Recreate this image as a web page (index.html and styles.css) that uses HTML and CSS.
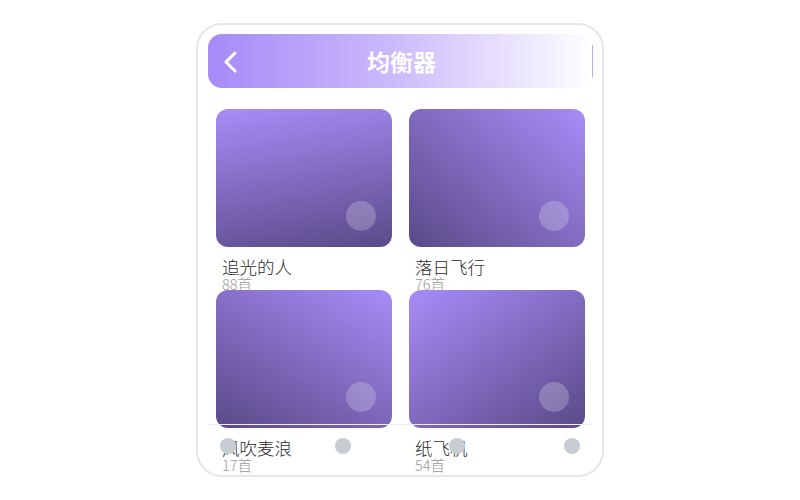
FILE: index.html
```html
<!DOCTYPE html>
<html lang="zh-CN">
<head>
    <meta charset="UTF-8">
    <meta name="viewport" content="width=device-width, initial-scale=1.0">
    <title>均衡器</title>
    <link rel="stylesheet" href="styles.css">
</head>
<body>
    <div class="phone">
        <header class="top-bar">
            <svg class="back" width="16" height="24" viewBox="0 0 16 24">
                <path d="M12 3 L3 12 L12 21" fill="none" stroke="#fff" stroke-width="3" stroke-linecap="round" stroke-linejoin="round"/>
            </svg>
            <h1>均衡器</h1>
            <span class="edge"></span>
        </header>

        <div class="grid">
            <div class="item">
                <div class="cover c1"><span class="play"></span></div>
                <p class="name">追光的人</p>
                <p class="count">88首</p>
            </div>
            <div class="item">
                <div class="cover c2"><span class="play"></span></div>
                <p class="name">落日飞行</p>
                <p class="count">76首</p>
            </div>
            <div class="item">
                <div class="cover c3"><span class="play"></span></div>
                <p class="name">风吹麦浪</p>
                <p class="count">17首</p>
            </div>
            <div class="item">
                <div class="cover c4"><span class="play"></span></div>
                <p class="name">纸飞机</p>
                <p class="count">54首</p>
            </div>
        </div>

        <nav class="tab-bar">
            <span class="dot"></span>
            <span class="dot"></span>
            <span class="dot"></span>
            <span class="dot"></span>
        </nav>
    </div>
</body>
</html>
```

FILE: styles.css
```css
/* 均衡器页面 */
body {
    margin: 0;
    height: 100vh;
    display: flex;
    align-items: center;
    justify-content: center;
    background-color: #fff;
    font-family: "Noto Sans CJK SC", "Noto Sans", sans-serif;
}

.phone {
    position: relative;
    width: 408px;
    height: 454px;
    box-sizing: border-box;
    border: 2px solid #e6e6ea;
    border-radius: 26px;
    overflow: hidden;
    background-color: #fff;
}

.top-bar {
    position: relative;
    height: 54px;
    margin: 9px 7px 0 10px;
    border-radius: 14px;
    background: linear-gradient(90deg, #a68af8 0%, #c9b7fb 45%, #fff 100%);
    display: flex;
    align-items: center;
    justify-content: center;
}

.top-bar .back {
    position: absolute;
    left: 15px;
    top: 16px;
}

.top-bar h1 {
    margin: 0;
    font-size: 23px;
    font-weight: 700;
    color: #fff;
}

.top-bar .edge {
    position: absolute;
    right: 2px;
    top: 11px;
    width: 1px;
    height: 32px;
    background-color: #b9a6f6;
}

.grid {
    display: grid;
    grid-template-columns: 1fr 1fr;
    column-gap: 17px;
    padding: 21px 17px 0 18px;
}

.cover {
    position: relative;
    height: 138px;
    border-radius: 12px;
}

.c1 { background: linear-gradient(170deg, #a88cf8 0%, #5a4a88 100%); }
.c2 { background: linear-gradient(220deg, #a88cf8 0%, #5a4a88 100%); }
.c3 { background: linear-gradient(210deg, #a88cf8 0%, #5a4a88 100%); }
.c4 { background: linear-gradient(145deg, #a88cf8 0%, #5a4a88 100%); }

.play {
    position: absolute;
    right: 16px;
    bottom: 16px;
    width: 30px;
    height: 30px;
    border-radius: 50%;
    background-color: rgba(255, 255, 255, 0.22);
}

.name {
    margin: 10px 0 0;
    padding-left: 6px;
    font-size: 17.5px;
    font-weight: 300;
    line-height: 20px;
    color: #2a2a2a;
}

.count {
    margin: 0;
    padding-left: 6px;
    font-size: 14.5px;
    font-weight: 300;
    line-height: 13px;
    color: #9a9a9a;
}

.tab-bar {
    position: absolute;
    left: 10px;
    right: 10px;
    bottom: 0;
    height: 51px;
    box-sizing: border-box;
    border-top: 1px solid #eeeef0;
    padding: 13px 12px 0;
    display: flex;
    justify-content: space-between;
    align-items: flex-start;
}

.dot {
    width: 16px;
    height: 16px;
    border-radius: 50%;
    background-color: #c8ccd3;
}
```
